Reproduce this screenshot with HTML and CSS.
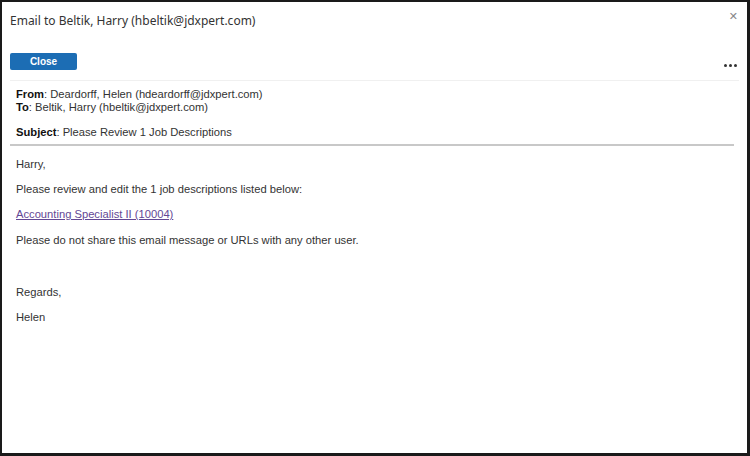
FILE: index.html
```html
<!DOCTYPE html>
<html>
<head>
<meta charset="utf-8">
<link rel="stylesheet" href="styles.css">
</head>
<body>
<div class="dialog">
  <div class="titlebar">
    <div class="title">Email to Beltik, Harry (hbeltik@jdxpert.com)</div>
    <div class="x">&#x2715;</div>
  </div>
  <div class="toolbar">
    <button class="btn">Close</button>
    <div class="more"><span></span><span></span><span></span></div>
  </div>
  <div class="mail">
    <div class="hdr">
      <div><b>From</b>: Deardorff, Helen (hdeardorff@jdxpert.com)</div>
      <div><b>To</b>: Beltik, Harry (hbeltik@jdxpert.com)</div>
    </div>
    <div class="subject"><b>Subject</b>: Please Review 1 Job Descriptions</div>
    <div class="body">
      <p>Harry,</p>
      <p>Please review and edit the 1 job descriptions listed below:</p>
      <p><a href="#">Accounting Specialist II (10004)</a></p>
      <p>Please do not share this email message or URLs with any other user.</p>
      <p class="gap">Regards,</p>
      <p>Helen</p>
    </div>
  </div>
</div>
</body>
</html>
```

FILE: styles.css
```css
html, body {
  margin: 0;
  padding: 0;
  background: #fff;
}
.dialog {
  box-sizing: border-box;
  width: 750px;
  height: 456px;
  border: 2px solid #1a1a1a;
  border-right-width: 3px;
  border-bottom-width: 3px;
  background: #fff;
  overflow: hidden;
}
.titlebar {
  display: flex;
  justify-content: space-between;
  align-items: center;
  height: 34px;
  padding: 0 9px 0 8px;
}
.title {
  font-family: "Noto Sans", sans-serif;
  font-size: 12px;
  color: #333;
  padding-top: 2px;
}
.x {
  font-family: "DejaVu Sans", sans-serif;
  font-size: 11px;
  color: #888;
  margin-top: -6px;
}
.toolbar {
  display: flex;
  justify-content: space-between;
  align-items: flex-end;
  margin: 17px 8px 0 8px;
  padding-bottom: 10px;
  border-bottom: 1px solid #f0f0f0;
}
.btn {
  width: 67px;
  height: 17px;
  border: 0;
  border-radius: 2px;
  background: #1c6db4;
  color: #fff;
  font-family: "Liberation Sans", Arial, sans-serif;
  font-weight: bold;
  font-size: 10px;
  padding: 0;
  line-height: 17px;
}
.more {
  display: flex;
  gap: 2px;
  padding: 0 2px 3px 0;
}
.more span {
  width: 3px;
  height: 3px;
  border-radius: 50%;
  background: #333;
}
.mail {
  margin: 0 13px 0 8px;
  font-family: "Liberation Sans", Arial, sans-serif;
  font-size: 11.2px;
  color: #333;
}
.hdr {
  padding: 7px 6px 0;
  line-height: 13px;
}
.hdr b, .subject b {
  color: #111;
}
.subject {
  padding: 12px 6px 5px;
  line-height: 13px;
  border-bottom: 2px solid #c8c8c8;
}
.body {
  padding: 0 6px;
}
.body p {
  margin: 11.2px 0 0;
  line-height: 14px;
}
.body p:first-child {
  margin-top: 11px;
}
.body p.gap {
  margin-top: 38px;
}
a {
  color: #634795;
  text-decoration: underline;
}
```
